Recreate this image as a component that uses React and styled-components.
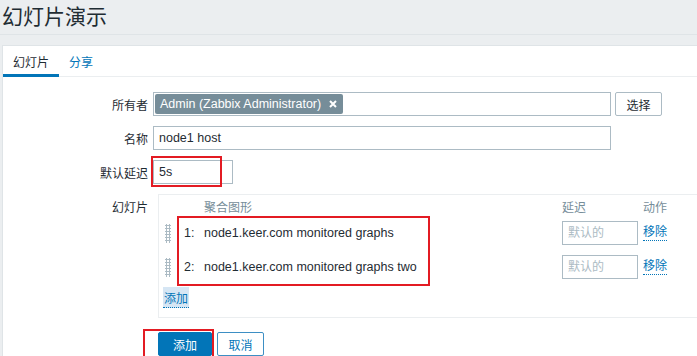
import React from 'react';
import styled, { createGlobalStyle } from 'styled-components';

const GlobalStyle = createGlobalStyle`
  html, body {
    margin: 0;
    padding: 0;
    background: #ebeef0;
    overflow: hidden;
  }
  body {
    font-family: "Liberation Sans", Arial, "Noto Sans CJK SC", sans-serif;
    font-size: 12px;
    color: #1f2c33;
  }
`;

const slides = [
  { id: 1, name: 'node1.keer.com monitored graphs' },
  { id: 2, name: 'node1.keer.com monitored graphs two' },
];

export default function App() {
  return (
    <Page>
      <GlobalStyle />
      <Header>
        <Title>幻灯片演示</Title>
      </Header>
      <Panel>
        <Tabs>
          <Tab active>幻灯片</Tab>
          <Tab>分享</Tab>
        </Tabs>
        <Form>
          <Row>
            <Label>所有者</Label>
            <MultiSelect>
              <Tag>
                Admin (Zabbix Administrator)
                <svg width="8" height="8" viewBox="0 0 8 8">
                  <path d="M1 1 L7 7 M7 1 L1 7" stroke="#fff" strokeWidth="2" />
                </svg>
              </Tag>
            </MultiSelect>
            <AltButton>选择</AltButton>
          </Row>
          <Row>
            <Label>名称</Label>
            <TextInput width={458} defaultValue="node1 host" />
          </Row>
          <Row>
            <Label>默认延迟</Label>
            <TextInput width={80} defaultValue="5s" />
          </Row>
          <Row top>
            <Label top>幻灯片</Label>
            <SlideBox>
              <SlideGrid>
                <HeadCell col={3}>聚合图形</HeadCell>
                <HeadCell col={4}>延迟</HeadCell>
                <HeadCell col={5}>动作</HeadCell>
                {slides.map(s => (
                  <React.Fragment key={s.id}>
                    <Cell>
                      <DragHandle />
                    </Cell>
                    <Cell wide>{s.id}:</Cell>
                    <Cell wide>{s.name}</Cell>
                    <Cell>
                      <TextInput width={76} placeholder="默认的" />
                    </Cell>
                    <Cell>
                      <DottedLink>移除</DottedLink>
                    </Cell>
                  </React.Fragment>
                ))}
              </SlideGrid>
              <AddLink>添加</AddLink>
            </SlideBox>
          </Row>
          <Buttons>
            <PrimaryButton>添加</PrimaryButton>
            <CancelButton>取消</CancelButton>
          </Buttons>
        </Form>
      </Panel>
      <Mark style={{ left: 151, top: 156, width: 71, height: 31 }} />
      <Mark style={{ left: 177, top: 216, width: 253, height: 70 }} />
      <Mark style={{ left: 143, top: 329, width: 71, height: 40 }} />
    </Page>
  );
}

const Page = styled.div`
  position: relative;
  height: 356px;
  overflow: hidden;
`;

const Header = styled.div`
  height: 34px;
  border-bottom: 1px solid #dfe4e7;
  padding-left: 2px;
  display: flex;
  align-items: center;
`;

const Title = styled.h1`
  margin: 0;
  font-size: 21px;
  font-weight: normal;
  line-height: 24px;
  color: #1f2c33;
`;

const Panel = styled.div`
  margin: 10px 0 0 2px;
  background: #fff;
  border: 1px solid #dfe4e7;
  border-right: none;
  min-height: 400px;
`;

const Tabs = styled.div`
  display: flex;
  height: 30px;
  border-bottom: 1px solid #ebeef0;
`;

const Tab = styled.div`
  padding: 0 10px;
  display: flex;
  align-items: center;
  color: ${p => (p.active ? '#1f2c33' : '#0275b8')};
  border-bottom: 3px solid ${p => (p.active ? '#0275b8' : 'transparent')};
  margin-bottom: -1px;
  padding-top: 3px;
`;

const Form = styled.div`
  padding-top: 15px;
  display: flex;
  flex-direction: column;
  gap: 10px;
`;

const Row = styled.div`
  display: flex;
  align-items: ${p => (p.top ? 'flex-start' : 'center')};
`;

const Label = styled.div`
  width: 145px;
  margin-right: 5px;
  text-align: right;
  padding-top: ${p => (p.top ? '4px' : '0')};
`;

const MultiSelect = styled.div`
  width: 458px;
  height: 24px;
  box-sizing: border-box;
  border: 1px solid #acbbc4;
  padding: 1px;
  display: flex;
  align-items: center;
`;

const Tag = styled.span`
  display: inline-flex;
  align-items: center;
  gap: 8px;
  height: 20px;
  padding: 0 6px 0 5px;
  background: #768d99;
  border-radius: 2px;
  color: #fff;
  font-size: 12.5px;
`;

const AltButton = styled.button`
  margin-left: 4px;
  height: 24px;
  width: 47px;
  background: #fff;
  border: 1px solid #acbbc4;
  border-radius: 2px;
  font: inherit;
  color: #1f2c33;
  padding: 0;
`;

const TextInput = styled.input`
  width: ${p => p.width}px;
  height: 24px;
  box-sizing: border-box;
  border: 1px solid #acbbc4;
  padding: 0 5px;
  font: inherit;
  font-size: 12.5px;
  color: #1f2c33;
  outline: none;
  &::placeholder {
    color: #acbbc4;
    font-size: 12px;
  }
`;

const SlideBox = styled.div`
  flex: 1;
  margin-left: 5px;
  border: 1px solid #ebeef0;
  border-right: none;
  padding: 6px 0 9px 4px;
`;

const SlideGrid = styled.div`
  display: grid;
  grid-template-columns: 21px 20px 358px 81px auto;
  grid-auto-rows: 34px;
  grid-template-rows: 15px;
  align-items: center;
`;

const HeadCell = styled.div`
  grid-column: ${p => p.col};
  color: #768d99;
  line-height: 15px;
`;

const Cell = styled.div`
  display: flex;
  align-items: center;
  font-size: ${p => (p.wide ? '12.5px' : '12px')};
`;

const DragHandle = styled.span`
  margin-left: 2px;
  width: 6px;
  height: 19px;
  background-image: radial-gradient(circle, #acbbc4 1px, transparent 1.3px);
  background-size: 3px 3px;
`;

const DottedLink = styled.span`
  color: #0275b8;
  border-bottom: 1px dotted #0275b8;
  line-height: 15px;
`;

const AddLink = styled.span`
  display: inline-flex;
  align-items: center;
  margin-top: 3px;
  height: 21px;
  padding: 0 1px;
  background: #d6e6f4;
  color: #0275b8;
  border-bottom: 1px dotted #0275b8;
  box-sizing: border-box;
`;

const Buttons = styled.div`
  display: flex;
  gap: 5px;
  padding-left: 155px;
  margin-top: 4px;
`;

const PrimaryButton = styled.button`
  width: 54px;
  height: 24px;
  background: #0275b8;
  border: 1px solid #0275b8;
  border-radius: 2px;
  color: #fff;
  font: inherit;
  padding: 0;
`;

const CancelButton = styled.button`
  width: 47px;
  height: 24px;
  background: #fff;
  border: 1px solid #3d8fc4;
  border-radius: 2px;
  color: #0275b8;
  font: inherit;
  padding: 0;
`;

const Mark = styled.div`
  position: absolute;
  box-sizing: border-box;
  border: 2px solid #e31b23;
  pointer-events: none;
`;
